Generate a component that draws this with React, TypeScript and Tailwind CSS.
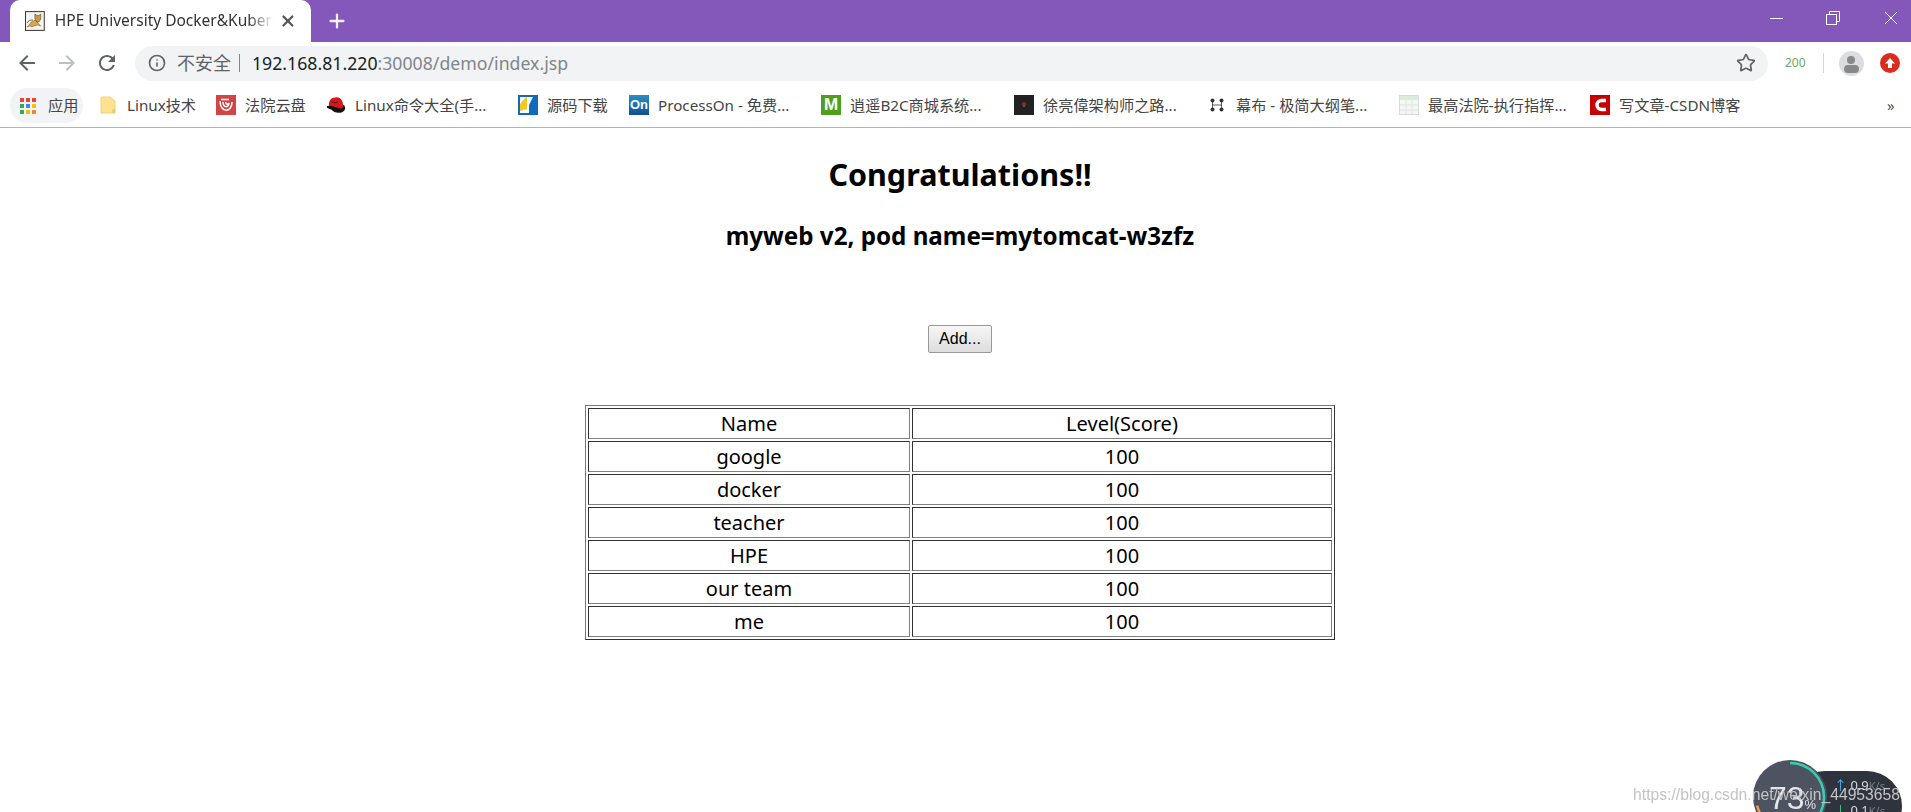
import React from 'react';
import { Info, Star, X, Plus } from 'lucide-react';

const uiFont = "font-['Noto_Sans','Noto_Sans_CJK_SC',sans-serif]";

const rows = ['google', 'docker', 'teacher', 'HPE', 'our team', 'me'];

const Folder = () => (
  <svg width="16" height="20" viewBox="0 0 16 20">
    <path d="M1 2h9l5 4v12H1z" fill="#fde293" stroke="#f5d36f" />
    <path d="M13 14h2v4h-3z" fill="#f0c95c" />
  </svg>
);

const Apps = () => (
  <svg width="16" height="16" viewBox="0 0 16 16">
    {[
      ['#ea4335', '#ea4335', '#ea4335'],
      ['#34a853', '#4285f4', '#fbbc05'],
      ['#34a853', '#fbbc05', '#ea8a35'],
    ].map((row, y) =>
      row.map((c, x) => <rect key={`${x}-${y}`} x={x * 6} y={y * 6} width="4" height="4" fill={c} />)
    )}
  </svg>
);

const Court = () => (
  <svg width="20" height="20" viewBox="0 0 20 20">
    <rect width="20" height="20" fill="#d24545" />
    <path d="M4 6c0 12 12 12 12 1" fill="none" stroke="#fff" strokeWidth="1.500" />
    <path d="M7 7c0 6 6 6 6 1-1 2-4 1-3-1" fill="none" stroke="#fff" strokeWidth="1.500" />
    <path d="M5 4.500h8" stroke="#fff" strokeWidth="1.500" />
  </svg>
);

const RedHat = () => (
  <svg width="21" height="20" viewBox="0 0 21 20">
    <path d="M1 11c-1 3 4 3 5 4 2 3 9 5 13 1 2-2 1-4 0-6z" fill="#111" />
    <path d="M3 11c0-6 2-9 7-9 5-1 8 3 8 9 0 3-3 3-6 2-3-2-6-1-9-2z" fill="#d9161c" />
    <path d="M6 7c2 0 4 1 6 0" fill="none" stroke="#111" strokeWidth="0.800" />
  </svg>
);

const Source = () => (
  <svg width="20" height="20" viewBox="0 0 20 20">
    <rect width="20" height="20" fill="#0f6cbd" />
    <rect x="2" y="2" width="16" height="16" fill="#fff" />
    <path d="M2 16V9L8 2h1v12z" fill="#f6c624" />
    <path d="M11 18V10l4-8h3v16z" fill="#0f6cbd" />
  </svg>
);

const ProcessOn = () => (
  <div className="w-5 h-5 bg-gradient-to-b from-[#2a8fc9] to-[#12508f] text-white text-[13px] font-bold leading-5 text-center font-['Liberation_Sans',sans-serif]">On</div>
);

const Mall = () => (
  <div className="w-5 h-5 bg-[#4ea01c] text-white text-[17px] font-bold leading-5 text-center font-['Liberation_Sans',sans-serif]">M</div>
);

const Dark = () => (
  <svg width="20" height="20" viewBox="0 0 20 20">
    <rect width="20" height="20" fill="#222" />
    <circle cx="10" cy="9" r="2" fill="#8a2b2b" />
    <circle cx="10" cy="11" r="1" fill="#3c7a3c" />
  </svg>
);

const Mubu = () => (
  <svg width="14" height="14" viewBox="0 0 14 14" fill="#333">
    <circle cx="2.500" cy="2.500" r="2" />
    <circle cx="11.500" cy="2.500" r="2" />
    <circle cx="2.500" cy="11.500" r="2" />
    <circle cx="11.500" cy="11.500" r="2" />
    <path d="M2.500 2.500v9M11.500 2.500v9M2.500 7h9" stroke="#333" strokeWidth="0.800" />
  </svg>
);

const Sheet = () => (
  <svg width="20" height="20" viewBox="0 0 20 20">
    <rect x="0.500" y="0.500" width="19" height="19" fill="#f4f8f4" stroke="#d5ddd5" />
    <rect x="1" y="1" width="18" height="4" fill="#dcebdc" />
    <path d="M7 5v14M13 5v14M1 10h18M1 15h18" stroke="#dfe5df" />
  </svg>
);

const Csdn = () => (
  <svg width="20" height="20" viewBox="0 0 20 20">
    <rect width="20" height="20" fill="#c90000" />
    <path d="M16 5.500h-4.500a4.500 4.500 0 0 0 0 9H16" fill="none" stroke="#fff" strokeWidth="3.500" />
  </svg>
);

const Tomcat = () => (
  <svg width="20" height="20" viewBox="0 0 20 20">
    <rect x="0.500" y="0.500" width="19" height="19" fill="#f4f3ee" stroke="#333" />
    <path d="M2 16c2 0 3-5 6-6l3-1 2 3 3 3-3-1-4 1-2 1-2-1z" fill="#d8a54a" stroke="#7a5520" strokeWidth="0.500" />
    <path d="M10 3l2 1.500h2L16 3v5l-2 3h-2l-2-3z" fill="#c99a4a" stroke="#4a3415" strokeWidth="0.500" />
    <path d="M2 12c2-3 3-3 6-3" fill="none" stroke="#444" strokeWidth="0.800" />
  </svg>
);

const bookmarks = [
  { icon: <Folder />, label: 'Linux技术', w: 'w-[118px]' },
  { icon: <Court />, label: '法院云盘', w: 'w-[110px]' },
  { icon: <RedHat />, label: 'Linux命令大全(手...', w: 'w-[192px]' },
  { icon: <Source />, label: '源码下载', w: 'w-[111px]' },
  { icon: <ProcessOn />, label: 'ProcessOn - 免费...', w: 'w-[192px]' },
  { icon: <Mall />, label: '逍遥B2C商城系统...', w: 'w-[193px]' },
  { icon: <Dark />, label: '徐亮偉架构师之路...', w: 'w-[193px]' },
  { icon: <Mubu />, label: '幕布 - 极简大纲笔...', w: 'w-[192px]' },
  { icon: <Sheet />, label: '最高法院-执行指挥...', w: 'w-[191px]' },
  { icon: <Csdn />, label: '写文章-CSDN博客', w: 'w-[160px]' },
];

const TitleBar = () => (
  <div className="h-[42px] bg-[#8457ba] flex items-end pl-[10px]">
    <div className="w-[301px] h-[42px] bg-white rounded-t-[10px] flex items-center pl-[15px] pr-[14px]">
      <Tomcat />
      <span className="ml-[10px] w-[222px] overflow-hidden whitespace-nowrap text-[15.5px] text-[#333] [mask-image:linear-gradient(to_right,black_88%,transparent)]">HPE University Docker&amp;Kubernetes</span>
      <X size={18} strokeWidth={3} className="ml-[5px] text-[#555]" />
    </div>
    <Plus size={22} strokeWidth={2.500} className="ml-[15px] mb-[10px] text-white/90" />
    <div className="flex-1" />
    <div className="flex items-center h-[36px] mb-[6px] pr-[14px] text-white">
      <svg width="13" height="13" viewBox="0 0 13 13" className="mr-[43px]">
        <path d="M0 6.500h13" stroke="currentColor" />
      </svg>
      <svg width="14" height="14" viewBox="0 0 14 14" className="mr-[45px]" fill="none" stroke="currentColor">
        <path d="M3.500 3.500V0.500h10v10h-3" />
        <rect x="0.500" y="3.500" width="10" height="10" />
      </svg>
      <svg width="12" height="12" viewBox="0 0 12 12" stroke="currentColor">
        <path d="M0 0l12 12M12 0L0 12" />
      </svg>
    </div>
  </div>
);

const Toolbar = () => (
  <div className="h-[42px] bg-white flex items-center pl-[15px]">
    <svg width="24" height="24" viewBox="0 0 24 24" fill="#5f6368">
      <path d="M20 11H7.830l5.590-5.590L12 4l-8 8 8 8 1.410-1.410L7.830 13H20v-2z" />
    </svg>
    <svg width="24" height="24" viewBox="0 0 24 24" fill="#bdc1c6" className="ml-[16px]">
      <path d="M12 4l-1.410 1.410L16.170 11H4v2h12.170l-5.580 5.590L12 20l8-8z" />
    </svg>
    <svg width="24" height="24" viewBox="0 0 24 24" fill="#5f6368" className="ml-[16px]">
      <path d="M17.650 6.350C16.200 4.900 14.210 4 12 4c-4.420 0-7.990 3.580-7.990 8s3.570 8 7.990 8c3.730 0 6.840-2.550 7.730-6h-2.080c-.82 2.330-3.040 4-5.650 4-3.310 0-6-2.690-6-6s2.690-6 6-6c1.660 0 3.140.69 4.220 1.780L13 11h7V4l-2.350 2.350z" />
    </svg>
    <div className="ml-[16px] w-[1633px] h-[35px] rounded-full bg-[#f1f3f4] flex items-center pl-[13px] pr-[12px]">
      <Info size={18} strokeWidth={2.200} className="text-[#5f6368]" />
      <span className="ml-[11px] pt-[1px] text-[18px] text-[#5f6368]">不安全</span>
      <span className="ml-[8px] w-px h-[18px] bg-[#80868b]" />
      <span className="ml-[12px] pt-[1px] text-[17.700px] text-[#202124]">192.168.81.220<span className="text-[#80868b]">:30008/demo/index.jsp</span></span>
      <div className="flex-1" />
      <Star size={20} strokeWidth={2} className="text-[#5f6368]" />
    </div>
    <span className="ml-[17px] text-[12px] text-[#6aa56a]">200</span>
    <span className="ml-[17px] w-px h-[20px] bg-[#d4d6d9]" />
    <div className="ml-[15px] w-[25px] h-[25px] rounded-full bg-[#dcdde0] overflow-hidden flex flex-col items-center">
      <div className="mt-[5px] w-[8px] h-[8px] rounded-full bg-[#888]" />
      <div className="mt-[1px] w-[15px] h-[8px] rounded-full bg-[#888]" />
    </div>
    <div className="ml-[16px] w-[20px] h-[20px] rounded-full bg-[#db2c20] flex items-center justify-center">
      <svg width="12" height="12" viewBox="0 0 12 12" fill="#fff">
        <path d="M6 1l5 5.500H8V11H4V6.500H1z" />
      </svg>
    </div>
  </div>
);

const BookmarkBar = () => (
  <div className="h-[44px] bg-white border-b border-[#b4b4b4] flex items-center pl-[10px] text-[15.200px] text-[#444]">
    <div className="w-[73px] h-[35px] rounded-full bg-[#f1f3f4] flex items-center pl-[10px] mr-[15px]">
      <Apps />
      <span className="ml-[12px]">应用</span>
    </div>
    {bookmarks.map((b) => (
      <div key={b.label} className={`${b.w} flex items-center shrink-0`}>
        <span className="w-[20px] flex justify-center shrink-0">{b.icon}</span>
        <span className="ml-[9px] whitespace-nowrap">{b.label}</span>
      </div>
    ))}
    <span className="ml-[137px] text-[15px] leading-none text-[#555]">»</span>
  </div>
);

export default function App() {
  return (
    <div className={`relative w-[1911px] h-[812px] overflow-hidden bg-white ${uiFont}`}>
      <TitleBar />
      <Toolbar />
      <BookmarkBar />

      <div className="w-[1920px] flex flex-col items-center text-black">
        <h1 className="mt-[23px] text-[30.500px] leading-[46px] font-bold">Congratulations!!</h1>
        <h3 className="mt-[22px] text-[24.200px] leading-[34px] font-bold">myweb v2, pod name=mytomcat-w3zfz</h3>
        <button className="mt-[72px] w-[64px] h-[28px] border border-[#999] rounded-[2px] bg-gradient-to-b from-[#f6f6f6] to-[#dedede] text-[16px] font-['Liberation_Sans',sans-serif]">Add...</button>
        <table className="mt-[52px] w-[750px] border-separate border-spacing-[2px] border border-t-[#777] border-l-[#777] border-r-[#333] border-b-[#333] text-[20px] text-center">
          <tbody>
            <tr>
              <td className="w-[322px] h-[31px] p-0 leading-[28px] border border-t-[#333] border-l-[#333] border-r-[#808080] border-b-[#808080]">Name</td>
              <td className="h-[31px] p-0 leading-[28px] border border-t-[#333] border-l-[#333] border-r-[#808080] border-b-[#808080]">Level(Score)</td>
            </tr>
            {rows.map((name) => (
              <tr key={name}>
                <td className="h-[31px] p-0 leading-[28px] border border-t-[#333] border-l-[#333] border-r-[#808080] border-b-[#808080]">{name}</td>
                <td className="h-[31px] p-0 leading-[28px] border border-t-[#333] border-l-[#333] border-r-[#808080] border-b-[#808080]">100</td>
              </tr>
            ))}
          </tbody>
        </table>
      </div>

      {/* speed widget + watermark, both sit over the page */}
      <div className="absolute left-[1790px] top-[771px] w-[112px] h-[70px] rounded-[35px] bg-[#2f333d] flex flex-col pl-[44px] pt-[2px] text-[#d5d8de] text-[13px] leading-[25px] blur-[0.6px]">
        <span><span className="text-[#4fb3ea]">↑</span> 0.9<span className="text-[#7b808a] text-[11px]">K/s</span></span>
        <span><span className="text-[#3fcf7a]">↓</span> 0.1<span className="text-[#7b808a] text-[11px]">K/s</span></span>
      </div>
      <div className="absolute left-[1753px] top-[760px] w-[74px] h-[74px] rounded-full bg-[#4e5361] blur-[0.5px]">
        <svg width="74" height="74" viewBox="0 0 74 74" className="absolute inset-0">
          <circle cx="37" cy="37" r="34" fill="none" stroke="#38cfb0" strokeWidth="2.500" strokeDasharray="107 300" transform="rotate(-90 37 37)" />
          <circle cx="37" cy="37" r="34" fill="none" stroke="#e5a04a" strokeWidth="2.500" strokeDasharray="18 300" transform="rotate(135 37 37)" />
        </svg>
        <span className="absolute left-[16px] top-[18px] text-[32px] leading-[40px] text-[#e4e6ea] font-['Liberation_Sans',sans-serif]">73<span className="text-[13px]">%</span></span>
      </div>
      <div className="absolute right-[11px] top-[784px] text-[15.700px] leading-[22px] text-[#c4c4c4] font-['Liberation_Sans',sans-serif] blur-[0.4px] whitespace-nowrap">https://blog.csdn.net/weixin_44953658</div>
    </div>
  );
}
